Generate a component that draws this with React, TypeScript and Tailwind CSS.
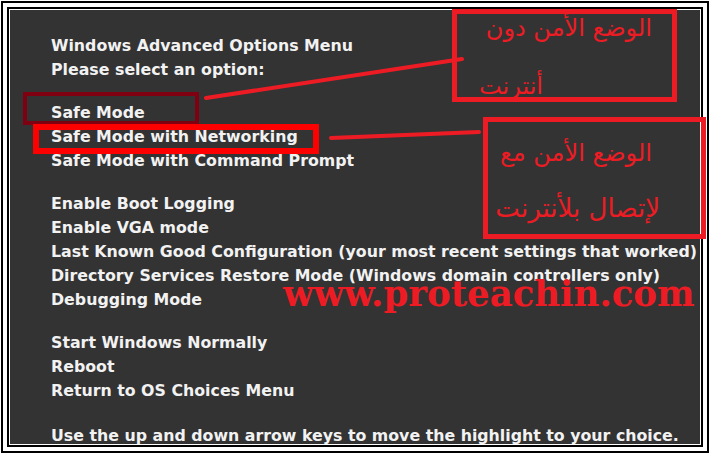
import React from "react";

const groups: string[][] = [
  ["Windows Advanced Options Menu", "Please select an option:"],
  ["Safe Mode", "Safe Mode with Networking", "Safe Mode with Command Prompt"],
  [
    "Enable Boot Logging",
    "Enable VGA mode",
    "Last Known Good Configuration (your most recent settings that worked)",
    "Directory Services Restore Mode (Windows domain controllers only)",
    "Debugging Mode",
  ],
  ["Start Windows Normally", "Reboot", "Return to OS Choices Menu"],
];

const arabic = { fontFamily: '"DejaVu Sans", sans-serif' };

export default function App() {
  return (
    <div className="relative w-[710px] h-[454px] bg-white p-[1px] overflow-hidden">
      <div className="h-full border-2 border-black p-[4px]">
        <div className="h-full border-2 border-black p-[1px]">
          <div
            className="h-full bg-[#333333] pt-[24px] pl-[41px] text-[#f2f2f2] font-bold text-[15.8px] leading-[24px] flex flex-col gap-[19px]"
            style={{ fontFamily: '"DejaVu Sans", Verdana, sans-serif' }}
          >
            {groups.map((g, i) => (
              <div key={i} className="flex flex-col">
                {g.map((t) => (
                  <div key={t} className="whitespace-nowrap">
                    {t}
                  </div>
                ))}
              </div>
            ))}
            <div className="mt-[2px] whitespace-nowrap">
              Use the up and down arrow keys to move the highlight to your choice.
            </div>
          </div>
        </div>
      </div>

      {/* annotation lines */}
      <svg className="absolute inset-0 pointer-events-none" width="710" height="454">
        <line x1="206" y1="98" x2="462" y2="59" stroke="#ed1c24" strokeWidth="4" strokeLinecap="round" />
        <line x1="331" y1="138" x2="479" y2="132" stroke="#ed1c24" strokeWidth="4" strokeLinecap="round" />
      </svg>

      {/* highlight boxes */}
      <div className="absolute left-[23px] top-[92px] w-[176px] h-[33px] border-[4px] border-[#7f0011]" />
      <div className="absolute left-[33px] top-[124px] w-[286px] h-[30px] border-[6px] border-[#ff0000]" />

      {/* arabic callouts */}
      <div
        className="absolute left-[452px] top-[9px] w-[225px] h-[93px] border-[5px] border-[#ed1c24] flex flex-col items-end pr-[20px] gap-[30px] text-[24px] leading-[28px] text-[#ed1c24]"
        style={arabic}
      >
        <span dir="rtl" className="whitespace-nowrap">الوضع الأمن دون</span>
        <span dir="rtl" className="whitespace-nowrap mr-[109px]">أنترنت</span>
      </div>
      <div
        className="absolute left-[483px] top-[117px] w-[223px] h-[122px] border-[5px] border-[#ed1c24] flex flex-col items-end pt-[17px] pr-[49px] gap-[27px] text-[24px] leading-[28px] text-[#ed1c24]"
        style={arabic}
      >
        <span dir="rtl" className="whitespace-nowrap">الوضع الأمن مع</span>
        <span dir="rtl" className="whitespace-nowrap mr-[-8px] text-[26px]">لإتصال بلأنترنت</span>
      </div>

      {/* watermark */}
      <div
        className="absolute left-[283px] top-[276px] text-[35.5px] leading-none font-bold text-[#ed1c24] whitespace-nowrap"
        style={{ fontFamily: '"DejaVu Serif", serif' }}
      >
        www.proteachin.com
      </div>
    </div>
  );
}
